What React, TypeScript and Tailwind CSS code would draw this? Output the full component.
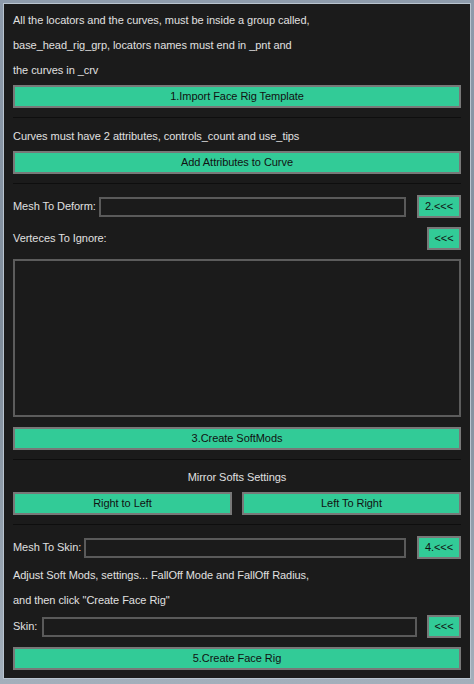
import React from "react";

const F = { fontFamily: '"Liberation Sans", Arial, sans-serif' };

function Btn({ children, className = "" }: { children: React.ReactNode; className?: string }) {
  return (
    <div
      className={`h-[23px] flex items-center justify-center border-2 border-[#787878] bg-[#32cb97] text-[#111] text-[11px] leading-none ${className}`}
    >
      {children}
    </div>
  );
}

function Sep({ className = "" }: { className?: string }) {
  return <div className={`h-px bg-[#0e0e0e] ${className}`} />;
}

function Input({ className = "" }: { className?: string }) {
  return <div className={`h-[20px] border-2 border-[#5a5a5a] bg-[#1b1b1b] ${className}`} />;
}

export default function App() {
  return (
    <div
      className="w-[474px] h-[684px] pt-[3px] pl-[3px] pr-[3px] pb-[5px] bg-gradient-to-b from-[#8e9bab] via-[#7f8c9a] to-[#a3afbb]"
      style={F}
    >
      <div className="w-full h-full border border-[#b9c4cf] bg-[#1b1b1b] px-[9px] pt-[4px] flex flex-col text-[#e0e0e0] text-[11px] tracking-[-0.05px]">
        <div className="leading-[25px]">
          <div>All the locators and the curves, must be inside a group called,</div>
          <div>base_head_rig_grp, locators names must end in _pnt and</div>
          <div>the curves in _crv</div>
        </div>
        <Btn className="mt-[2px]">1.Import Face Rig Template</Btn>
        <Sep className="mt-[9px]" />
        <div className="mt-[6px] leading-[25px]">Curves must have 2 attributes, controls_count and use_tips</div>
        <Btn className="mt-[2px]">Add Attributes to Curve</Btn>
        <Sep className="mt-[9px]" />
        <div className="mt-[11px] h-[23px] flex items-center">
          <span className="mr-[3px]">Mesh To Deform:</span>
          <Input className="flex-1" />
          <Btn className="ml-[11px] w-[44px]">2.&lt;&lt;&lt;</Btn>
        </div>
        <div className="mt-[9px] h-[23px] flex items-center justify-between">
          <span>Verteces To Ignore:</span>
          <Btn className="w-[34px]">&lt;&lt;&lt;</Btn>
        </div>
        <div className="mt-[9px] h-[158px] border-2 border-[#5c5c5c]" />
        <Btn className="mt-[10px]">3.Create SoftMods</Btn>
        <Sep className="mt-[9px]" />
        <div className="mt-[5px] leading-[25px] text-center">Mirror Softs Settings</div>
        <div className="mt-[2px] flex gap-[10px]">
          <Btn className="flex-1">Right to Left</Btn>
          <Btn className="flex-1">Left To Right</Btn>
        </div>
        <Sep className="mt-[9px]" />
        <div className="mt-[11px] h-[23px] flex items-center">
          <span className="mr-[3px]">Mesh To Skin:</span>
          <Input className="flex-1" />
          <Btn className="ml-[11px] w-[44px]">4.&lt;&lt;&lt;</Btn>
        </div>
        <div className="mt-[4px] leading-[25px]">
          <div>Adjust Soft Mods, settings... FallOff Mode and FallOff Radius,</div>
          <div>and then click "Create Face Rig"</div>
        </div>
        <div className="mt-[2px] h-[23px] flex items-center">
          <span className="mr-[5px]">Skin:</span>
          <Input className="flex-1" />
          <Btn className="ml-[10px] w-[34px]">&lt;&lt;&lt;</Btn>
        </div>
        <Btn className="mt-[9px]">5.Create Face Rig</Btn>
      </div>
    </div>
  );
}
